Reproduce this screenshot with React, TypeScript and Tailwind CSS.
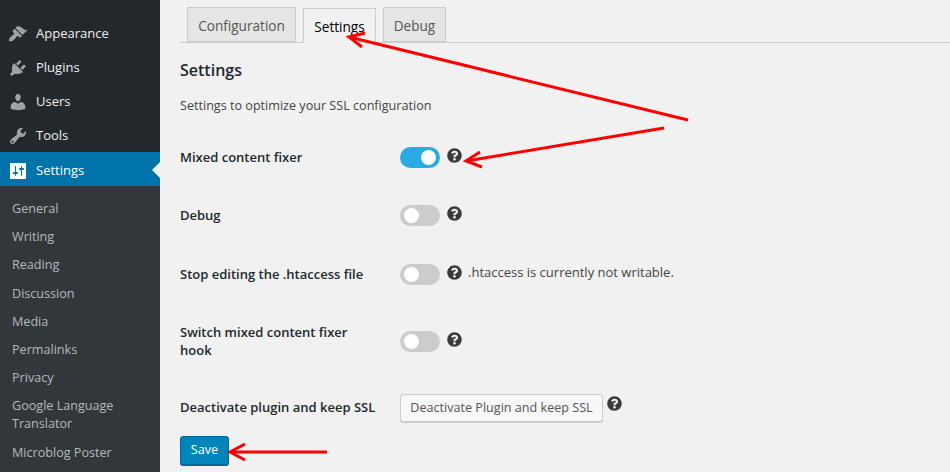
import React from "react";
import { FaQuestionCircle } from "react-icons/fa";

const font = "font-['Open_Sans','Liberation_Sans',sans-serif]";

function Dash({ d, className }: { d: string; className?: string }) {
  return (
    <svg width="20" height="20" viewBox="0 0 20 20" className={className}>
      <path d={d} fill="currentColor" fillRule="evenodd" />
    </svg>
  );
}

const brush =
  "M14.48 11.06L7.41 3.99l1.5-1.5c.5-.56 2.3-.47 3.51.32 1.21.8 1.43 1.28 2.91 2.1 1.18.64 2.45 1.26 4.45.85zm-.71.71L6.7 4.7 4.93 6.47c-.39.39-.39 1.02 0 1.41l1.06 1.06c.39.39.39 1.03 0 1.42-.6.6-1.43 1.11-2.21 1.69-.35.26-.7.53-1.01.84C1.43 13.23 1 14.6 1 17.24c2.64 0 4.01-.43 5.34-1.76.31-.31.58-.66.84-1.01.58-.78 1.09-1.61 1.69-2.21.39-.39 1.03-.39 1.42 0l1.06 1.06c.39.39 1.02.39 1.41 0z";
const plug =
  "M13.11 4.36L9.87 7.6 8 5.73l3.24-3.24c.35-.34 1.05-.2 1.56.32.52.51.66 1.21.31 1.55zm-8 1.77l.91-1.12 9.01 9.01-1.19.84c-.71.71-2.63 1.16-3.82 1.16H6.14L4.9 17.26c-.59.59-1.54.59-2.12 0-.59-.58-.59-1.53 0-2.12l1.24-1.24v-3.88c0-1.13.4-3.19 1.09-3.89zm7.26 3.97l3.24-3.24c.34-.35 1.04-.21 1.55.31.52.51.66 1.21.31 1.55l-3.24 3.25z";
const user =
  "M10 9.25c-2.27 0-2.73-3.44-2.73-3.44C7 4.02 7.82 2 9.97 2c2.16 0 2.98 2.02 2.71 3.81 0 0-.41 3.44-2.68 3.44zm0 2.57L12.72 10c2.39 0 4.52 2.33 4.52 4.53v2.49s-3.65 1.13-7.24 1.13c-3.65 0-7.24-1.13-7.24-1.13v-2.49c0-2.25 1.94-4.48 4.47-4.48z";
const wrench =
  "M16.68 9.77c-1.34 1.34-3.3 1.67-4.95.99l-5.41 6.52c-.99.99-2.59.99-3.58 0s-.99-2.59 0-3.57l6.52-5.42c-.68-1.65-.35-3.61.99-4.95 1.28-1.28 3.12-1.62 4.72-1.06l-2.89 2.89 2.82 2.82 2.86-2.87c.53 1.58.18 3.39-1.08 4.65zM3.81 16.21c.4.39 1.04.39 1.43 0 .4-.4.4-1.04 0-1.43-.39-.4-1.03-.4-1.43 0-.39.39-.39 1.03 0 1.43z";
const sliders =
  "M18 18V2H2v16zM8 11h1c.55 0 1 .45 1 1s-.45 1-1 1H8v1.500c0 .28-.22.5-.5.5s-.5-.22-.5-.5V13H6c-.55 0-1-.45-1-1s.45-1 1-1h1V5.500c0-.28.22-.5.5-.5s.5.22.5.5V11zm5-2h-1c-.55 0-1-.45-1-1s.45-1 1-1h1V5.500c0-.28.22-.5.5-.5s.5.22.5.5V7h1c.55 0 1 .45 1 1s-.45 1-1 1h-1v5.500c0 .28-.22.5-.5.5s-.5-.22-.5-.5V9z";

function MenuItem({ icon, label }: { icon: string; label: string }) {
  return (
    <div className="flex h-[34px] items-center pt-[2px] text-[13px] text-[#eeeeee]">
      <div className="flex w-[36px] justify-center text-[#9ea3a8]">
        <Dash d={icon} />
      </div>
      <span>{label}</span>
    </div>
  );
}

function SubItem({ label }: { label: string }) {
  return <div className="px-3 py-[5.1px] text-[12.6px] leading-[18px] text-[#b4b9be]">{label}</div>;
}

function Help() {
  return <FaQuestionCircle className="size-[15px] shrink-0 text-[#3b3b3b]" />;
}

function Toggle({ on }: { on?: boolean }) {
  return (
    <div className={`flex h-[21px] w-[40px] shrink-0 items-center rounded-full px-[4px] ${on ? "justify-end bg-[#2ba9e4]" : "justify-start bg-[#cccccc]"}`}>
      <div className="size-[15px] rounded-full bg-white" />
    </div>
  );
}

function Row({ label, height, children }: { label: React.ReactNode; height: string; children: React.ReactNode }) {
  return (
    <div className={`flex items-center ${height}`}>
      <div className="w-[220px] pr-4 text-[13px] font-semibold leading-[18px] text-[#23282d]">{label}</div>
      <div className="flex items-center gap-[7px]">{children}</div>
    </div>
  );
}

function Tab({ label, active, width }: { label: string; active?: boolean; width: string }) {
  return (
    <div
      className={`flex h-[35px] items-center justify-center border border-[#cccccc] pt-[3px] text-[13.6px] font-medium ${width} ${
        active ? "mb-[-1px] border-b-[#f1f1f1] bg-[#f1f1f1] text-[#000000]" : "bg-[#e5e5e5] text-[#555555]"
      }`}
    >
      {label}
    </div>
  );
}

export default function App() {
  return (
    <div className={`relative flex h-[472px] w-[950px] overflow-hidden bg-[#f1f1f1] ${font}`}>
      <aside className="w-[160px] shrink-0 bg-[#23282d] pt-4">
        <MenuItem icon={brush} label="Appearance" />
        <MenuItem icon={plug} label="Plugins" />
        <MenuItem icon={user} label="Users" />
        <MenuItem icon={wrench} label="Tools" />
        <div className="relative flex h-[34px] items-center bg-[#0073aa] pt-[3px] text-[13px] text-white">
          <div className="flex w-[36px] justify-center">
            <Dash d={sliders} />
          </div>
          <span>Settings</span>
          <div className="absolute right-0 top-[10px] border-y-[8px] border-r-[8px] border-y-transparent border-r-[#f1f1f1]" />
        </div>
        <div className="h-full bg-[#32373c] pt-[9px]">
          <SubItem label="General" />
          <SubItem label="Writing" />
          <SubItem label="Reading" />
          <SubItem label="Discussion" />
          <SubItem label="Media" />
          <SubItem label="Permalinks" />
          <SubItem label="Privacy" />
          <SubItem label="Google Language Translator" />
          <SubItem label="Microblog Poster" />
        </div>
      </aside>

      <main className="min-w-0 flex-1 pl-5">
        <div className="flex h-[43px] items-end gap-[7px] border-b border-[#cccccc] pl-[7px]">
          <Tab label="Configuration" width="w-[109px]" />
          <Tab label="Settings" active width="w-[73px]" />
          <Tab label="Debug" width="w-[63px]" />
        </div>
        <h2 className="mt-[16px] text-[16px] font-semibold leading-[22px] text-[#23282d]">Settings</h2>
        <p className="mt-[15px] text-[12.6px] leading-[20px] text-[#444444]">Settings to optimize your SSL configuration</p>
        <div className="mt-[12px]">
          <Row label="Mixed content fixer" height="h-[58px]">
            <Toggle on />
            <div className="-mt-[3px]"><Help /></div>
          </Row>
          <Row label="Debug" height="h-[58px]">
            <Toggle />
            <div className="-mt-[3px]"><Help /></div>
          </Row>
          <Row label="Stop editing the .htaccess file" height="h-[60px]">
            <Toggle />
            <div className="-mt-[3px]"><Help /></div>
            <span className="-ml-[1px] -mt-[3px] text-[13px] text-[#444444]">.htaccess is currently not writable.</span>
          </Row>
          <Row label={<>Switch mixed content fixer<br />hook</>} height="h-[74px]">
            <Toggle />
            <div className="-mt-[3px]"><Help /></div>
          </Row>
          <Row label="Deactivate plugin and keep SSL" height="h-[58px]">
            <button className="mt-[2px] h-[28px] w-[203px] rounded-[3px] border border-[#cccccc] bg-[#f7f7f7] text-[12.6px] text-[#555555] shadow-[0_1px_0_#cccccc]">
              Deactivate Plugin and keep SSL
            </button>
            <div className="-ml-[3px] -mt-[7px]"><Help /></div>
          </Row>
        </div>
        <button className="h-[29px] w-[49px] rounded-[3px] border border-[#006799] bg-[#0085ba] text-[12.6px] text-white shadow-[0_1px_0_#006799]">
          Save
        </button>
      </main>

      <svg className="pointer-events-none absolute inset-0" width="950" height="472" viewBox="0 0 950 472" fill="none">
        <g stroke="#ff0000" strokeWidth="3">
          <path d="M688 120L349 37" />
          <path d="M365 33L349 37L362 47" />
          <path d="M664 128L466 161" />
          <path d="M480 152L466 161L482 167" />
          <path d="M327 452H230" />
          <path d="M245 444L230 452L245 460" />
        </g>
      </svg>
    </div>
  );
}
